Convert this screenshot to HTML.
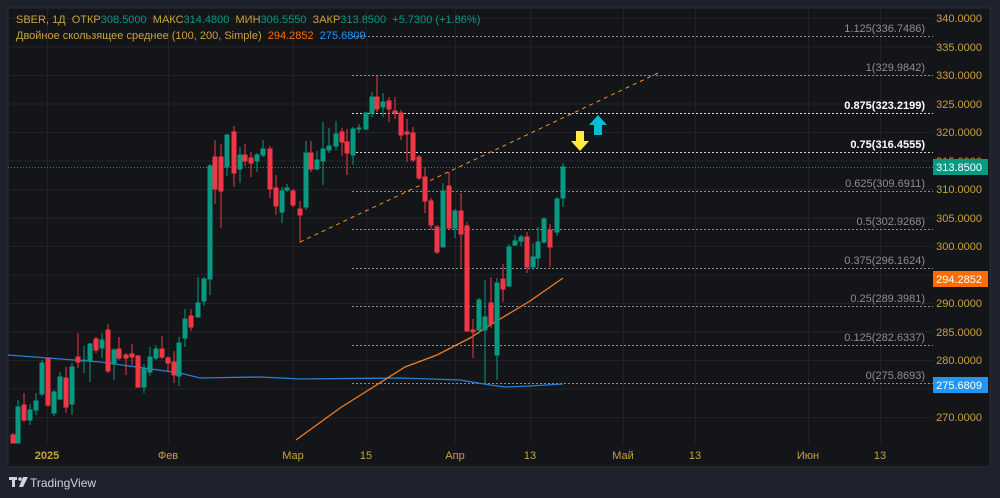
<!DOCTYPE html>
<html><head><meta charset="utf-8"><style>
html,body{margin:0;padding:0;background:#1e222d;width:1000px;height:498px;overflow:hidden;font-family:"Liberation Sans","DejaVu Sans",sans-serif}
svg{position:absolute;left:0;top:0}
</style></head><body>
<svg width="1000" height="498" viewBox="0 0 1000 498" font-family="Liberation Sans, DejaVu Sans, sans-serif">
<rect x="8" y="8" width="982" height="459" fill="#131519" stroke="#2a2e39"/>
<!-- grid -->
<g stroke="#1f2229" stroke-width="1">
<line x1="8" x2="933" y1="18.5" y2="18.5"/><line x1="8" x2="933" y1="47" y2="47"/><line x1="8" x2="933" y1="75.5" y2="75.5"/><line x1="8" x2="933" y1="104" y2="104"/><line x1="8" x2="933" y1="132.5" y2="132.5"/><line x1="8" x2="933" y1="161" y2="161"/><line x1="8" x2="933" y1="189.5" y2="189.5"/><line x1="8" x2="933" y1="218" y2="218"/><line x1="8" x2="933" y1="246.5" y2="246.5"/><line x1="8" x2="933" y1="275" y2="275"/><line x1="8" x2="933" y1="303.5" y2="303.5"/><line x1="8" x2="933" y1="332" y2="332"/><line x1="8" x2="933" y1="360.5" y2="360.5"/><line x1="8" x2="933" y1="389" y2="389"/><line x1="8" x2="933" y1="417.5" y2="417.5"/>
<line x1="47.5" x2="47.5" y1="8" y2="443"/><line x1="168.5" x2="168.5" y1="8" y2="443"/><line x1="293.5" x2="293.5" y1="8" y2="443"/><line x1="366.5" x2="366.5" y1="8" y2="443"/><line x1="455.5" x2="455.5" y1="8" y2="443"/><line x1="530.5" x2="530.5" y1="8" y2="443"/><line x1="623.5" x2="623.5" y1="8" y2="443"/><line x1="695.5" x2="695.5" y1="8" y2="443"/><line x1="808.5" x2="808.5" y1="8" y2="443"/><line x1="880.5" x2="880.5" y1="8" y2="443"/>
</g>
<!-- fib lines -->
<g stroke-width="1" stroke-dasharray="2,2">
<line x1="352" x2="933" y1="36.5" y2="36.5" stroke="#8a8e98"/>
<line x1="352" x2="933" y1="75.5" y2="75.5" stroke="#8a8e98"/>
<line x1="352" x2="933" y1="113.5" y2="113.5" stroke="#d8d8d8"/>
<line x1="352" x2="933" y1="152.5" y2="152.5" stroke="#d8d8d8"/>
<line x1="352" x2="933" y1="191.5" y2="191.5" stroke="#8a8e98"/>
<line x1="352" x2="933" y1="229.5" y2="229.5" stroke="#8a8e98"/>
<line x1="352" x2="933" y1="268.5" y2="268.5" stroke="#8a8e98"/>
<line x1="352" x2="933" y1="306.5" y2="306.5" stroke="#8a8e98"/>
<line x1="352" x2="933" y1="345.5" y2="345.5" stroke="#8a8e98"/>
<line x1="352" x2="933" y1="383.5" y2="383.5" stroke="#8a8e98"/>
</g>
<g font-size="11" text-anchor="end" fill="#8a8e98">
<text x="925" y="32">1.125(336.7486)</text>
<text x="925" y="71">1(329.9842)</text>
<text x="925" y="109" fill="#fff" font-weight="bold">0.875(323.2199)</text>
<text x="925" y="148" fill="#fff" font-weight="bold">0.75(316.4555)</text>
<text x="925" y="187">0.625(309.6911)</text>
<text x="925" y="225">0.5(302.9268)</text>
<text x="925" y="264">0.375(296.1624)</text>
<text x="925" y="302">0.25(289.3981)</text>
<text x="925" y="341">0.125(282.6337)</text>
<text x="925" y="379">0(275.8693)</text>
</g>
<!-- current price line -->
<line x1="8" x2="933" y1="167.5" y2="167.5" stroke="#089981" stroke-dasharray="1,2"/>
<!-- trend line -->
<line x1="300" y1="242" x2="658" y2="73" stroke="#f7931a" stroke-width="1" stroke-dasharray="4,4"/>
<!-- MAs -->
<polyline fill="none" stroke="#2a7fd4" stroke-width="1.3" points="8,355 100,362 180,373 200,378 260,377 300,379 400,378 460,380 490,385 505,387 530,386 563,384"/>
<polyline fill="none" stroke="#f57c1f" stroke-width="1.3" points="296,440 340,408 405,367 437,355 470,338 490,325 530,301 563,278"/>
<!-- candles -->
<g stroke="#089981" fill="#089981">
<line x1="18" x2="18" y1="400" y2="443"/><rect x="16" y="407" width="4" height="36"/>
<line x1="30" x2="30" y1="404" y2="425"/><rect x="28" y="410" width="4" height="10"/>
<line x1="36" x2="36" y1="393" y2="415"/><rect x="34" y="401" width="4" height="9"/>
<line x1="42" x2="42" y1="360" y2="396"/><rect x="40" y="363" width="4" height="31"/>
<line x1="54" x2="54" y1="390" y2="416"/><rect x="52" y="392" width="4" height="21"/>
<line x1="60" x2="60" y1="372" y2="400"/><rect x="58" y="377" width="4" height="22"/>
<line x1="72" x2="72" y1="363" y2="415"/><rect x="70" y="367" width="4" height="37"/>
<line x1="84" x2="84" y1="346" y2="373"/><rect x="82" y="360" width="4" height="1"/>
<line x1="90" x2="90" y1="343" y2="382"/><rect x="88" y="344" width="4" height="17"/>
<line x1="102" x2="102" y1="333" y2="358"/><rect x="100" y="340" width="4" height="8"/>
<line x1="114" x2="114" y1="348" y2="380"/><rect x="112" y="350" width="4" height="14"/>
<line x1="144" x2="144" y1="364" y2="393"/><rect x="142" y="369" width="4" height="18"/>
<line x1="150" x2="150" y1="347" y2="376"/><rect x="148" y="357" width="4" height="15"/>
<line x1="156" x2="156" y1="345" y2="360"/><rect x="154" y="349" width="4" height="9"/>
<line x1="179" x2="179" y1="337" y2="386"/><rect x="177" y="343" width="4" height="33"/>
<line x1="185" x2="185" y1="309" y2="347"/><rect x="183" y="319" width="4" height="19"/>
<line x1="198" x2="198" y1="277" y2="317"/><rect x="196" y="303" width="4" height="14"/>
<line x1="204" x2="204" y1="277" y2="306"/><rect x="202" y="279" width="4" height="22"/>
<line x1="210" x2="210" y1="164" y2="295"/><rect x="208" y="166" width="4" height="113"/>
<line x1="227" x2="227" y1="134" y2="176"/><rect x="225" y="135" width="4" height="32"/>
<line x1="240" x2="240" y1="147" y2="183"/><rect x="238" y="155" width="4" height="14"/>
<line x1="257" x2="257" y1="153" y2="172"/><rect x="255" y="155" width="4" height="6"/>
<line x1="263" x2="263" y1="140" y2="157"/><rect x="261" y="149" width="4" height="6"/>
<line x1="282" x2="282" y1="187" y2="223"/><rect x="280" y="191" width="4" height="21"/>
<line x1="287" x2="287" y1="184" y2="192"/><rect x="285" y="188" width="4" height="2"/>
<line x1="306" x2="306" y1="141" y2="210"/><rect x="304" y="153" width="4" height="54"/>
<line x1="317" x2="317" y1="151" y2="170"/><rect x="315" y="160" width="4" height="9"/>
<line x1="323" x2="323" y1="122" y2="185"/><rect x="321" y="149" width="4" height="12"/>
<line x1="329" x2="329" y1="128" y2="153"/><rect x="327" y="146" width="4" height="4"/>
<line x1="336" x2="336" y1="121" y2="150"/><rect x="334" y="134" width="4" height="12"/>
<line x1="353" x2="353" y1="127" y2="165"/><rect x="351" y="129" width="4" height="26"/>
<line x1="359" x2="359" y1="124" y2="133"/><rect x="357" y="128" width="4" height="1"/>
<line x1="366" x2="366" y1="112" y2="130"/><rect x="364" y="113" width="4" height="16"/>
<line x1="372" x2="372" y1="92" y2="117"/><rect x="370" y="97" width="4" height="16"/>
<line x1="383" x2="383" y1="93" y2="117"/><rect x="381" y="102" width="4" height="5"/>
<line x1="443" x2="443" y1="183" y2="247"/><rect x="441" y="191" width="4" height="56"/>
<line x1="455" x2="455" y1="209" y2="238"/><rect x="453" y="211" width="4" height="17"/>
<line x1="479" x2="479" y1="298" y2="334"/><rect x="477" y="300" width="4" height="30"/>
<line x1="485" x2="485" y1="280" y2="383"/><rect x="483" y="317" width="4" height="13"/>
<line x1="497" x2="497" y1="278" y2="380"/><rect x="495" y="283" width="4" height="72"/>
<line x1="509" x2="509" y1="244" y2="287"/><rect x="507" y="247" width="4" height="39"/>
<line x1="515" x2="515" y1="235" y2="246"/><rect x="513" y="241" width="4" height="4"/>
<line x1="521" x2="521" y1="235" y2="246"/><rect x="519" y="237" width="4" height="4"/>
<line x1="533" x2="533" y1="243" y2="270"/><rect x="531" y="257" width="4" height="10"/>
<line x1="538" x2="538" y1="227" y2="268"/><rect x="536" y="242" width="4" height="16"/>
<line x1="544" x2="544" y1="217" y2="244"/><rect x="542" y="219" width="4" height="23"/>
<line x1="557" x2="557" y1="197" y2="236"/><rect x="555" y="199" width="4" height="33"/>
<line x1="563" x2="563" y1="163" y2="207"/><rect x="561" y="167" width="4" height="31"/>
</g>
<g stroke="#f23645" fill="#f23645">
<line x1="13" x2="13" y1="433" y2="443"/><rect x="11" y="435" width="4" height="8"/>
<line x1="24" x2="24" y1="393" y2="422"/><rect x="22" y="405" width="4" height="15"/>
<line x1="48" x2="48" y1="357" y2="407"/><rect x="46" y="359" width="4" height="46"/>
<line x1="66" x2="66" y1="367" y2="413"/><rect x="64" y="378" width="4" height="29"/>
<line x1="78" x2="78" y1="333" y2="368"/><rect x="76" y="357" width="4" height="5"/>
<line x1="96" x2="96" y1="337" y2="353"/><rect x="94" y="339" width="4" height="11"/>
<line x1="108" x2="108" y1="324" y2="373"/><rect x="106" y="330" width="4" height="41"/>
<line x1="119" x2="119" y1="337" y2="360"/><rect x="117" y="349" width="4" height="9"/>
<line x1="126" x2="126" y1="353" y2="375"/><rect x="124" y="355" width="4" height="3"/>
<line x1="132" x2="132" y1="344" y2="365"/><rect x="130" y="354" width="4" height="3"/>
<line x1="138" x2="138" y1="355" y2="388"/><rect x="136" y="356" width="4" height="31"/>
<line x1="162" x2="162" y1="336" y2="359"/><rect x="160" y="349" width="4" height="8"/>
<line x1="168" x2="168" y1="356" y2="372"/><rect x="166" y="358" width="4" height="5"/>
<line x1="174" x2="174" y1="351" y2="383"/><rect x="172" y="362" width="4" height="13"/>
<line x1="191" x2="191" y1="309" y2="331"/><rect x="189" y="316" width="4" height="11"/>
<line x1="215" x2="215" y1="140" y2="204"/><rect x="213" y="157" width="4" height="32"/>
<line x1="221" x2="221" y1="144" y2="228"/><rect x="219" y="157" width="4" height="34"/>
<line x1="234" x2="234" y1="126" y2="187"/><rect x="232" y="132" width="4" height="41"/>
<line x1="245" x2="245" y1="144" y2="166"/><rect x="243" y="155" width="4" height="6"/>
<line x1="251" x2="251" y1="152" y2="177"/><rect x="249" y="158" width="4" height="5"/>
<line x1="270" x2="270" y1="146" y2="198"/><rect x="268" y="149" width="4" height="40"/>
<line x1="276" x2="276" y1="175" y2="215"/><rect x="274" y="188" width="4" height="18"/>
<line x1="293" x2="293" y1="189" y2="207"/><rect x="291" y="191" width="4" height="14"/>
<line x1="300" x2="300" y1="201" y2="243"/><rect x="298" y="209" width="4" height="6"/>
<line x1="311" x2="311" y1="141" y2="172"/><rect x="309" y="153" width="4" height="16"/>
<line x1="342" x2="342" y1="128" y2="156"/><rect x="340" y="132" width="4" height="10"/>
<line x1="347" x2="347" y1="129" y2="175"/><rect x="345" y="142" width="4" height="11"/>
<line x1="377" x2="377" y1="76" y2="112"/><rect x="375" y="97" width="4" height="12"/>
<line x1="389" x2="389" y1="97" y2="122"/><rect x="387" y="101" width="4" height="8"/>
<line x1="395" x2="395" y1="97" y2="119"/><rect x="393" y="111" width="4" height="2"/>
<line x1="401" x2="401" y1="110" y2="140"/><rect x="399" y="113" width="4" height="22"/>
<line x1="407" x2="407" y1="119" y2="162"/><rect x="405" y="132" width="4" height="2"/>
<line x1="413" x2="413" y1="127" y2="162"/><rect x="411" y="133" width="4" height="27"/>
<line x1="419" x2="419" y1="155" y2="180"/><rect x="417" y="157" width="4" height="21"/>
<line x1="425" x2="425" y1="167" y2="213"/><rect x="423" y="177" width="4" height="24"/>
<line x1="431" x2="431" y1="198" y2="230"/><rect x="429" y="201" width="4" height="24"/>
<line x1="437" x2="437" y1="225" y2="254"/><rect x="435" y="227" width="4" height="25"/>
<line x1="449" x2="449" y1="172" y2="230"/><rect x="447" y="186" width="4" height="42"/>
<line x1="461" x2="461" y1="193" y2="268"/><rect x="459" y="211" width="4" height="23"/>
<line x1="467" x2="467" y1="222" y2="332"/><rect x="465" y="226" width="4" height="105"/>
<line x1="473" x2="473" y1="319" y2="358"/><rect x="471" y="330" width="4" height="2"/>
<line x1="491" x2="491" y1="277" y2="328"/><rect x="489" y="303" width="4" height="21"/>
<line x1="503" x2="503" y1="264" y2="302"/><rect x="501" y="279" width="4" height="10"/>
<line x1="527" x2="527" y1="232" y2="273"/><rect x="525" y="237" width="4" height="30"/>
<line x1="550" x2="550" y1="224" y2="267"/><rect x="548" y="230" width="4" height="17"/>
</g>
<!-- arrows -->
<polygon points="576,131 584,131 584,141 589,141 580,151 571,141 576,141" fill="#ffeb3b"/>
<polygon points="594,135 602,135 602,125 607,125 598,115 589,125 594,125" fill="#00bcd4"/>
<!-- price axis -->
<g font-size="11" fill="#c8a23c" text-anchor="end">
<text x="982" y="22">340.0000</text><text x="982" y="51">335.0000</text><text x="982" y="79">330.0000</text><text x="982" y="108">325.0000</text><text x="982" y="136">320.0000</text><text x="982" y="165">315.0000</text><text x="982" y="193">310.0000</text><text x="982" y="222">305.0000</text><text x="982" y="250">300.0000</text><text x="982" y="279">295.0000</text><text x="982" y="307">290.0000</text><text x="982" y="336">285.0000</text><text x="982" y="364">280.0000</text><text x="982" y="393">275.0000</text><text x="982" y="421">270.0000</text>
</g>
<rect x="933" y="159" width="55" height="16" fill="#089981"/>
<text x="982" y="171" font-size="11" fill="#fff" text-anchor="end">313.8500</text>
<rect x="933" y="271" width="55" height="16" fill="#ff6d00"/>
<text x="982" y="283" font-size="11" fill="#fff" text-anchor="end">294.2852</text>
<rect x="933" y="377" width="55" height="16" fill="#2196f3"/>
<text x="982" y="389" font-size="11" fill="#fff" text-anchor="end">275.6809</text>
<!-- time axis -->
<g font-size="11" fill="#c8a23c" text-anchor="middle">
<text x="47" y="459" font-weight="bold">2025</text><text x="168" y="459">Фев</text><text x="293" y="459">Мар</text><text x="366" y="459">15</text><text x="455" y="459">Апр</text><text x="530" y="459">13</text><text x="623" y="459">Май</text><text x="695" y="459">13</text><text x="808" y="459">Июн</text><text x="880" y="459">13</text>
</g>
<!-- legend -->
<text x="16" y="23" font-size="11" fill="#c8a23c" xml:space="preserve">SBER, 1Д  ОТКР<tspan fill="#089981">308.5000</tspan>  МАКС<tspan fill="#089981">314.4800</tspan>  МИН<tspan fill="#089981">306.5550</tspan>  ЗАКР<tspan fill="#089981">313.8500</tspan>  <tspan fill="#089981">+5.7300 (+1.86%)</tspan></text>
<text x="16" y="39" font-size="11" fill="#c8a23c" xml:space="preserve">Двойное скользящее среднее (100, 200, Simple)  <tspan fill="#ff6d00">294.2852</tspan>  <tspan fill="#2196f3">275.6809</tspan></text>
<!-- logo -->
<g fill="#d1d4dc">
<rect x="9" y="477" width="8" height="3"/><rect x="12" y="477" width="3" height="10"/>
<circle cx="20" cy="479" r="1.8"/>
<polygon points="23,477 28,477 23,487 19,487"/>
</g>
<text x="30" y="487" font-size="12" fill="#d1d4dc">TradingView</text>
</svg>
</body></html>
